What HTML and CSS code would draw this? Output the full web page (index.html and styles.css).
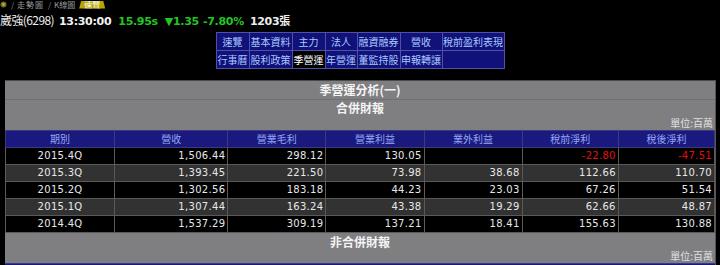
FILE: index.html
```html
<!DOCTYPE html>
<html lang="zh-Hant">
<head>
<meta charset="utf-8">
<link rel="stylesheet" href="styles.css">
</head>
<body>
<div class="tabs">
  <svg class="tab-icon" width="7" height="7" viewBox="0 0 7 7"><circle cx="3.5" cy="3.5" r="3" fill="#6b6a1e"/><circle cx="3.5" cy="3.5" r="1.4" fill="#b3ad3a"/></svg>
  <span class="tab">走勢圖</span>
  <span class="tab">K線圖</span>
  <span class="tab active">速覽</span>
</div>
<div class="quote">
  <span class="name">崴強(6298)</span>
  <span class="time">13:30:00</span>
  <span class="green price">15.95s</span>
  <span class="green chg">▼1.35</span>
  <span class="green pct">-7.80%</span>
  <span class="vol">1203張</span>
</div>
<table class="nav">
  <colgroup>
    <col class="n1"><col class="n2"><col class="n1"><col class="n3"><col class="n2"><col class="n4"><col>
  </colgroup>
  <tr>
    <td>速覽</td><td>基本資料</td><td>主力</td><td>法人</td><td>融資融券</td><td>營收</td><td>稅前盈利表現</td>
  </tr>
  <tr>
    <td>行事曆</td><td>股利政策</td><td class="current">季營運</td><td>年營運</td><td>董監持股</td><td>申報轉讓</td><td></td>
  </tr>
</table>
<div class="panel">
  <div class="title">季營運分析(一)</div>
  <div class="subtitle">合併財報</div>
  <div class="unit">單位:百萬</div>
  <table class="data">
    <colgroup>
      <col class="c1"><col class="c2"><col class="c3"><col class="c3"><col class="c3"><col class="c4"><col class="c4">
    </colgroup>
    <tr class="head"><th>期別</th><th>營收</th><th>營業毛利</th><th>營業利益</th><th>業外利益</th><th>稅前淨利</th><th>稅後淨利</th></tr>
    <tr class="odd"><td class="period">2015.4Q</td><td>1,506.44</td><td>298.12</td><td>130.05</td><td></td><td class="neg">-22.80</td><td class="neg">-47.51</td></tr>
    <tr class="even"><td class="period">2015.3Q</td><td>1,393.45</td><td>221.50</td><td>73.98</td><td>38.68</td><td>112.66</td><td>110.70</td></tr>
    <tr class="odd"><td class="period">2015.2Q</td><td>1,302.56</td><td>183.18</td><td>44.23</td><td>23.03</td><td>67.26</td><td>51.54</td></tr>
    <tr class="even"><td class="period">2015.1Q</td><td>1,307.44</td><td>163.24</td><td>43.38</td><td>19.29</td><td>62.66</td><td>48.87</td></tr>
    <tr class="odd"><td class="period">2014.4Q</td><td>1,537.29</td><td>309.19</td><td>137.21</td><td>18.41</td><td>155.63</td><td>130.88</td></tr>
  </table>
  <div class="subtitle second">非合併財報</div>
  <div class="unit second">單位:百萬</div>
  <div class="next-head"></div>
</div>
</body>
</html>
```
FILE: styles.css
```css
html, body {
  margin: 0;
  padding: 0;
  background: #000;
  overflow: hidden;
}
body {
  width: 720px;
  height: 265px;
  font-family: "DejaVu Sans", "Noto Sans CJK TC", sans-serif;
  color: #fff;
}
.tabs {
  display: flex;
  align-items: center;
  height: 9px;
  font-size: 8px;
  line-height: 8px;
  font-family: "Noto Sans CJK TC", sans-serif;
  color: #9a9a9a;
}
.tab-icon {
  display: block;
  margin-right: 3px;
}
.tab {
  padding: 0 3px 0 7px;
  position: relative;
}
.tab:first-of-type { letter-spacing: 1px; }
.tab::before {
  content: "/";
  position: absolute;
  left: 1px;
  color: #888;
}
.tab.active {
  color: #fff;
  background: #b8a400;
  padding: 0 5px;
  margin-left: 1px;
  clip-path: polygon(2px 0, calc(100% - 2px) 0, 100% 100%, 0 100%);
}
.tab.active::before { content: none; }
.quote {
  display: flex;
  align-items: baseline;
  height: 17px;
  padding-top: 2px;
  white-space: nowrap;
}
.quote .name {
  font-family: "Noto Sans CJK TC", sans-serif;
  font-size: 12px;
  color: #eee;
  margin-right: 5px;
  letter-spacing: -0.6px;
}
.quote .time, .quote .green, .quote .vol {
  font-size: 11px;
  font-weight: bold;
  letter-spacing: -0.3px;
}
.quote .time { color: #f2f2f2; margin-right: 7px; }
.quote .green { color: #22c622; }
.quote .price { margin-right: 7px; }
.quote .chg { margin-right: 4px; }
.quote .pct { margin-right: 6px; }
.quote .vol { color: #eee; }
.nav {
  margin: 4px auto 0;
  width: 289px;
  table-layout: fixed;
  border-collapse: collapse;
  background: #11117a;
  border: 1px solid #5050a8;
}
.nav .n1 { width: 33px; }
.nav .n2 { width: 43px; }
.nav .n3 { width: 32px; }
.nav .n4 { width: 42px; }
.nav td {
  border: 1px solid #5050a8;
  height: 17px;
  padding: 0;
  font-family: "Noto Sans CJK TC", sans-serif;
  font-size: 10px;
  line-height: 17px;
  color: #a9c9ff;
  text-align: center;
  white-space: nowrap;
  overflow: hidden;
}
.nav td.current {
  background: #000;
  color: #fff;
}
.panel {
  margin: 11px 4px 0 5px;
  background: #7f7f82;
  border-top: 1px solid #4a4a4a;
  border-right: 1px solid #555;
}
.title, .subtitle {
  font-family: "Noto Sans CJK TC", sans-serif;
  font-weight: bold;
  font-size: 12px;
  text-align: center;
  color: #f4f4f4;
}
.title {
  height: 18px;
  line-height: 18px;
  border-bottom: 1px solid #707073;
}
.subtitle { height: 15px; line-height: 15px; }
.subtitle.second { height: 16px; line-height: 17px; }
.unit {
  font-family: "Noto Sans CJK TC", sans-serif;
  font-size: 10px;
  text-align: right;
  color: #e0e0e0;
  height: 15px;
  line-height: 15px;
  padding-right: 2px;
}
.unit.second { height: 14px; line-height: 14px; }
.data {
  width: 710px;
  border-collapse: collapse;
  table-layout: fixed;
}
.data .c1 { width: 109px; }
.data .c2 { width: 113px; }
.data .c3 { width: 98px; }
.data .c4 { width: 96px; }
.data th, .data td {
  border: 1px solid #5a5a5a;
  height: 16px;
  padding: 0 2px;
  font-size: 10px;
  line-height: 16px;
  white-space: nowrap;
}
.data th {
  background: #1a1a7e;
  color: #96a6f4;
  font-weight: normal;
  font-family: "Noto Sans CJK TC", sans-serif;
  text-align: center;
  border-color: #3a3a80;
}
.data td {
  text-align: right;
  color: #e8e8e8;
  letter-spacing: 0.3px;
}
.data td.period { text-align: center; }
.data td.neg { color: #e01010; }
.data tr.odd td { background: #000; }
.data tr.even td { background: #323232; }
.next-head {
  width: 710px;
  height: 1px;
  background: #1a1a7e;
  border-top: 1px solid #3a3a80;
}
```
